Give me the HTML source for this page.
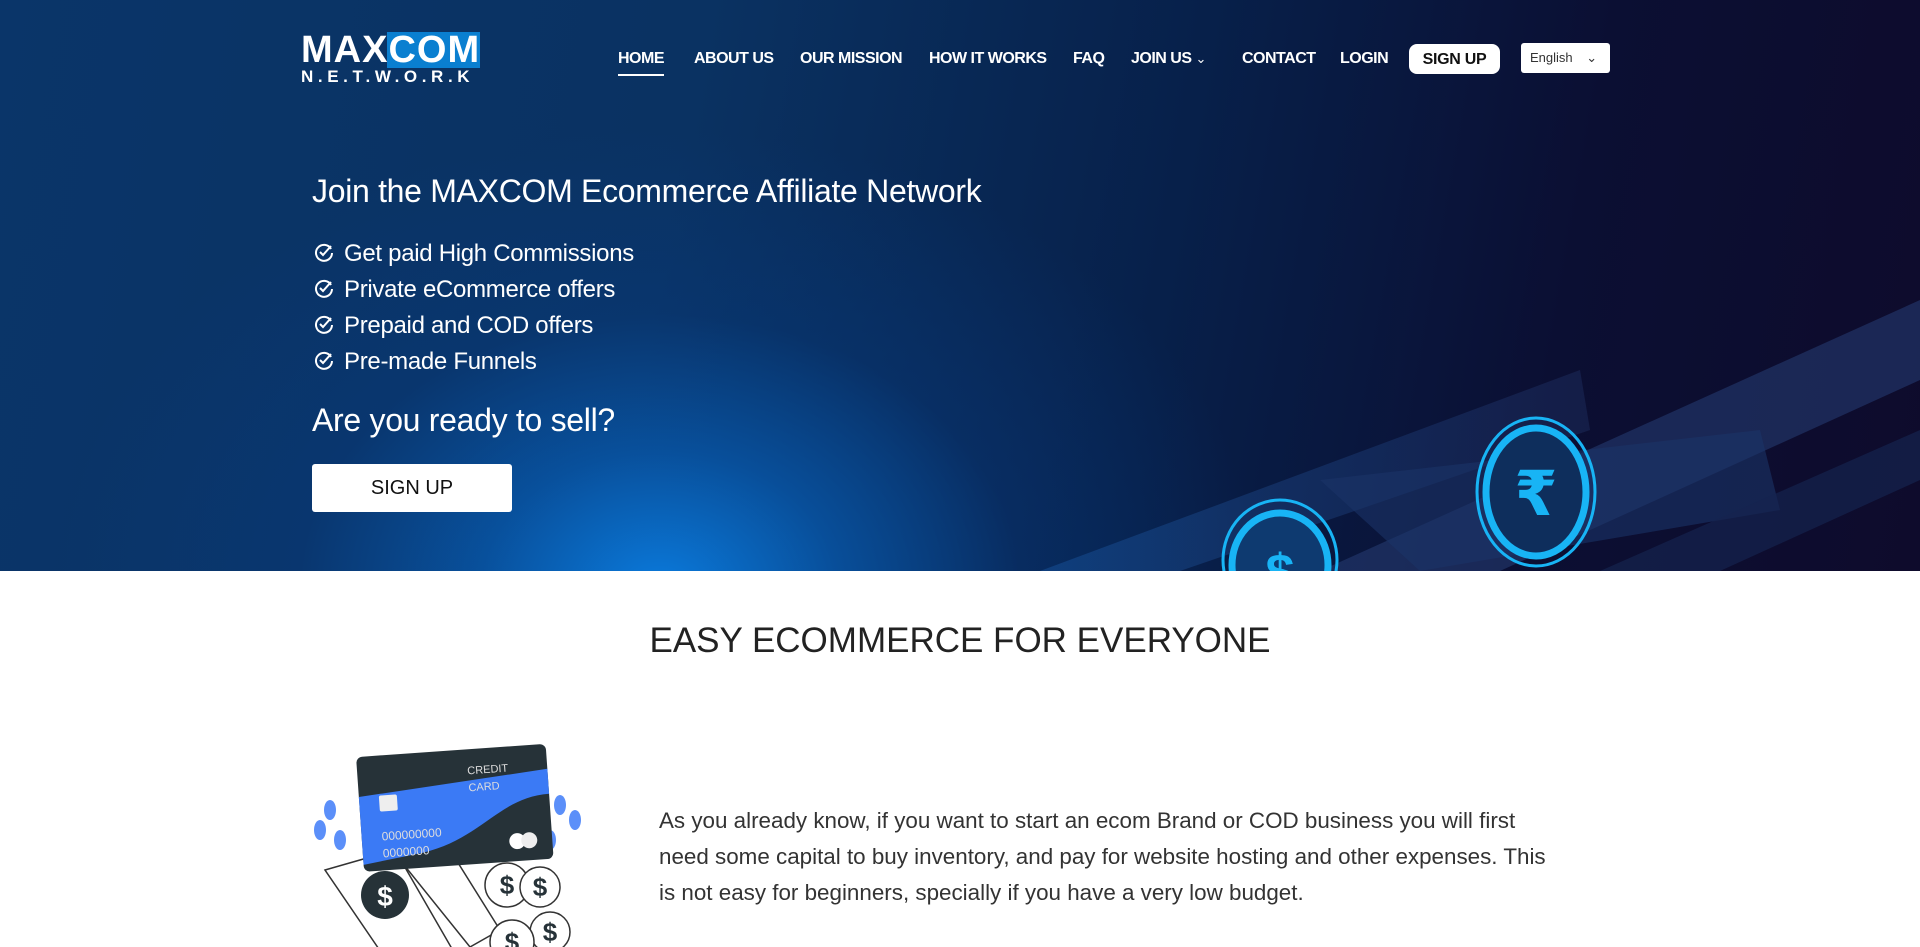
<!DOCTYPE html>
<html><head><meta charset="utf-8"><style>
*{margin:0;padding:0;box-sizing:border-box}
body{width:1920px;height:947px;overflow:hidden;background:#fff;font-family:"Liberation Sans",sans-serif;position:relative}
.hero{position:absolute;left:0;top:0;width:1920px;height:571px;overflow:hidden;
background:radial-gradient(ellipse 600px 460px at 660px 590px,rgba(10,122,220,1) 0%,rgba(8,90,175,.75) 30%,rgba(7,60,130,.35) 60%,rgba(6,50,110,0) 100%),linear-gradient(100deg,#0a3569 0%,#0a3262 35%,#07204a 60%,#0b0f33 80%,#0e0b2c 100%)}
.a{position:absolute;white-space:nowrap}
.nav{color:#fff;font-weight:bold;font-size:16px;top:50px;letter-spacing:-0.5px}
.w{color:#fff}
.ck{display:inline-block;width:20px;height:20px;margin-right:10px;vertical-align:-1px}
</style></head><body>
<div class="hero">
<svg class="a" style="left:0;top:0" width="1920" height="571">
<defs><linearGradient id="g" x1="0" x2="1"><stop offset="0" stop-color="#1a5aa8" stop-opacity=".7"/><stop offset="1" stop-color="#2a3f78" stop-opacity=".5"/></linearGradient></defs>
<polygon points="1040,571 1580,370 1590,430 1180,571" fill="url(#g)" opacity=".6"/>
<polygon points="1320,571 1920,300 1920,380 1500,571" fill="#243a70" opacity=".6"/>
<polygon points="1320,480 1760,430 1780,510 1420,571" fill="#1b3468" opacity=".6"/>
<polygon points="1600,571 1920,430 1920,480 1720,571" fill="#15244f" opacity=".7"/>
<ellipse cx="1536" cy="492" rx="59" ry="74" fill="none" stroke="#18b4f5" stroke-width="3"/>
<ellipse cx="1536" cy="492" rx="50" ry="64" fill="#0e2e5c" stroke="#18b4f5" stroke-width="7"/>
<text x="1536" y="515" fill="#18b4f5" font-size="62" font-weight="bold" text-anchor="middle" font-family="DejaVu Sans">₹</text>
<ellipse cx="1280" cy="560" rx="57" ry="60" fill="none" stroke="#18b4f5" stroke-width="3"/>
<ellipse cx="1280" cy="565" rx="48" ry="52" fill="#0e3a70" stroke="#18b4f5" stroke-width="7"/>
<text x="1280" y="590" fill="#18b4f5" font-size="52" font-weight="bold" text-anchor="middle">$</text>
</svg>
<div class="a" style="left:301px;top:32px;width:179px;height:52px">
<div class="a" style="left:86px;top:0;width:93px;height:36px;background:#0a7fd0"></div>
<div class="a w" style="left:0;top:-3px;font-size:38px;font-weight:bold;letter-spacing:1px">MAXCOM</div>
<div class="a w" style="left:0;top:35px;font-size:17px;font-weight:bold;letter-spacing:4.6px">N.E.T.W.O.R.K</div>
</div>
<div class="a nav" style="left:618px">HOME</div>
<div class="a" style="left:618px;top:74px;width:46px;height:2px;background:#fff"></div>
<div class="a nav" style="left:694px">ABOUT US</div>
<div class="a nav" style="left:800px">OUR MISSION</div>
<div class="a nav" style="left:929px">HOW IT WORKS</div>
<div class="a nav" style="left:1073px">FAQ</div>
<div class="a nav" style="left:1131px">JOIN US <span style="font-weight:normal;font-size:13px">&#8964;</span></div>
<div class="a nav" style="left:1242px">CONTACT</div>
<div class="a nav" style="left:1340px">LOGIN</div>
<div class="a" style="left:1409px;top:44px;width:91px;height:30px;background:#fff;border-radius:8px;color:#111;font-weight:bold;font-size:16px;text-align:center;line-height:31px;letter-spacing:-0.3px">SIGN UP</div>
<div class="a" style="left:1521px;top:43px;width:89px;height:30px;background:#fff;border-radius:3px;color:#333;font-size:13px;line-height:30px;padding-left:9px">English <span style="margin-left:10px">&#8964;</span></div>
<div class="a w" style="left:312px;top:173px;font-size:32px;letter-spacing:-0.3px">Join the MAXCOM Ecommerce Affiliate Network</div>
<div class="a w" style="left:314px;top:236px;font-size:24px;line-height:36px;letter-spacing:-0.3px">
<div><svg class="ck" viewBox="0 0 20 20"><path d="M17 7 A8 8 0 1 0 18 11" fill="none" stroke="#fff" stroke-width="2"/><path d="M6 10 L9 13 L17 4" fill="none" stroke="#fff" stroke-width="2"/></svg>Get paid High Commissions</div>
<div><svg class="ck" viewBox="0 0 20 20"><path d="M17 7 A8 8 0 1 0 18 11" fill="none" stroke="#fff" stroke-width="2"/><path d="M6 10 L9 13 L17 4" fill="none" stroke="#fff" stroke-width="2"/></svg>Private eCommerce offers</div>
<div><svg class="ck" viewBox="0 0 20 20"><path d="M17 7 A8 8 0 1 0 18 11" fill="none" stroke="#fff" stroke-width="2"/><path d="M6 10 L9 13 L17 4" fill="none" stroke="#fff" stroke-width="2"/></svg>Prepaid and COD offers</div>
<div><svg class="ck" viewBox="0 0 20 20"><path d="M17 7 A8 8 0 1 0 18 11" fill="none" stroke="#fff" stroke-width="2"/><path d="M6 10 L9 13 L17 4" fill="none" stroke="#fff" stroke-width="2"/></svg>Pre-made Funnels</div>
</div>
<div class="a w" style="left:312px;top:402px;font-size:32px;letter-spacing:-0.3px">Are you ready to sell?</div>
<div class="a" style="left:312px;top:464px;width:200px;height:48px;background:#fff;border-radius:3px;color:#111;font-size:20px;text-align:center;line-height:48px">SIGN UP</div>
</div>
<div class="a" style="left:0;width:1920px;top:621px;text-align:center;font-size:35px;color:#222">EASY ECOMMERCE FOR EVERYONE</div>
<div class="a" style="left:659px;top:803px;font-size:22.4px;line-height:36px;color:#333">As you already know, if you want to start an ecom Brand or COD business you will first<br>need some capital to buy inventory, and pay for website hosting and other expenses. This<br>is not easy for beginners, specially if you have a very low budget.</div>
<svg class="a" style="left:300px;top:720px" width="310" height="227">
<g fill="#5b8ff9"><ellipse cx="30" cy="90" rx="6" ry="10"/><ellipse cx="20" cy="110" rx="6" ry="10"/><ellipse cx="40" cy="120" rx="6" ry="10"/><ellipse cx="260" cy="85" rx="6" ry="10"/><ellipse cx="275" cy="100" rx="6" ry="10"/><ellipse cx="250" cy="120" rx="6" ry="10"/></g>
<polygon points="25,150 95,130 170,260 100,260" fill="#fff" stroke="#333" stroke-width="1.5"/>
<polygon points="100,140 150,130 200,210 170,227" fill="#fff" stroke="#333" stroke-width="1.5"/>
<circle cx="85" cy="175" r="24" fill="#263238"/><text x="85" y="186" fill="#fff" font-size="28" text-anchor="middle" font-weight="bold">$</text>
<g transform="rotate(-4 160 90)"><rect x="60" y="30" width="190" height="115" rx="6" fill="#263238"/>
<path d="M60 70 L250 55 L250 80 C200 80 180 120 120 130 L60 138Z" fill="#3b7af5"/>
<text x="170" y="55" fill="#ddd" font-size="11">CREDIT</text><text x="170" y="72" fill="#ddd" font-size="11">CARD</text>
<rect x="80" y="70" width="18" height="16" rx="2" fill="#eee"/>
<text x="80" y="115" fill="#ddd" font-size="12">000000000</text><text x="80" y="132" fill="#ddd" font-size="12">0000000</text>
<circle cx="215" cy="125" r="8" fill="#fff"/><circle cx="227" cy="125" r="8" fill="#eee"/></g>
<g fill="#fff" stroke="#333" stroke-width="1.5"><circle cx="207" cy="165" r="22"/><circle cx="240" cy="167" r="20"/><circle cx="250" cy="212" r="20"/><circle cx="212" cy="222" r="22"/></g>
<g fill="#263238" font-size="26" font-weight="bold" text-anchor="middle"><text x="207" y="174">$</text><text x="240" y="176">$</text><text x="250" y="221">$</text><text x="212" y="231">$</text></g>
</svg>
</body></html>
